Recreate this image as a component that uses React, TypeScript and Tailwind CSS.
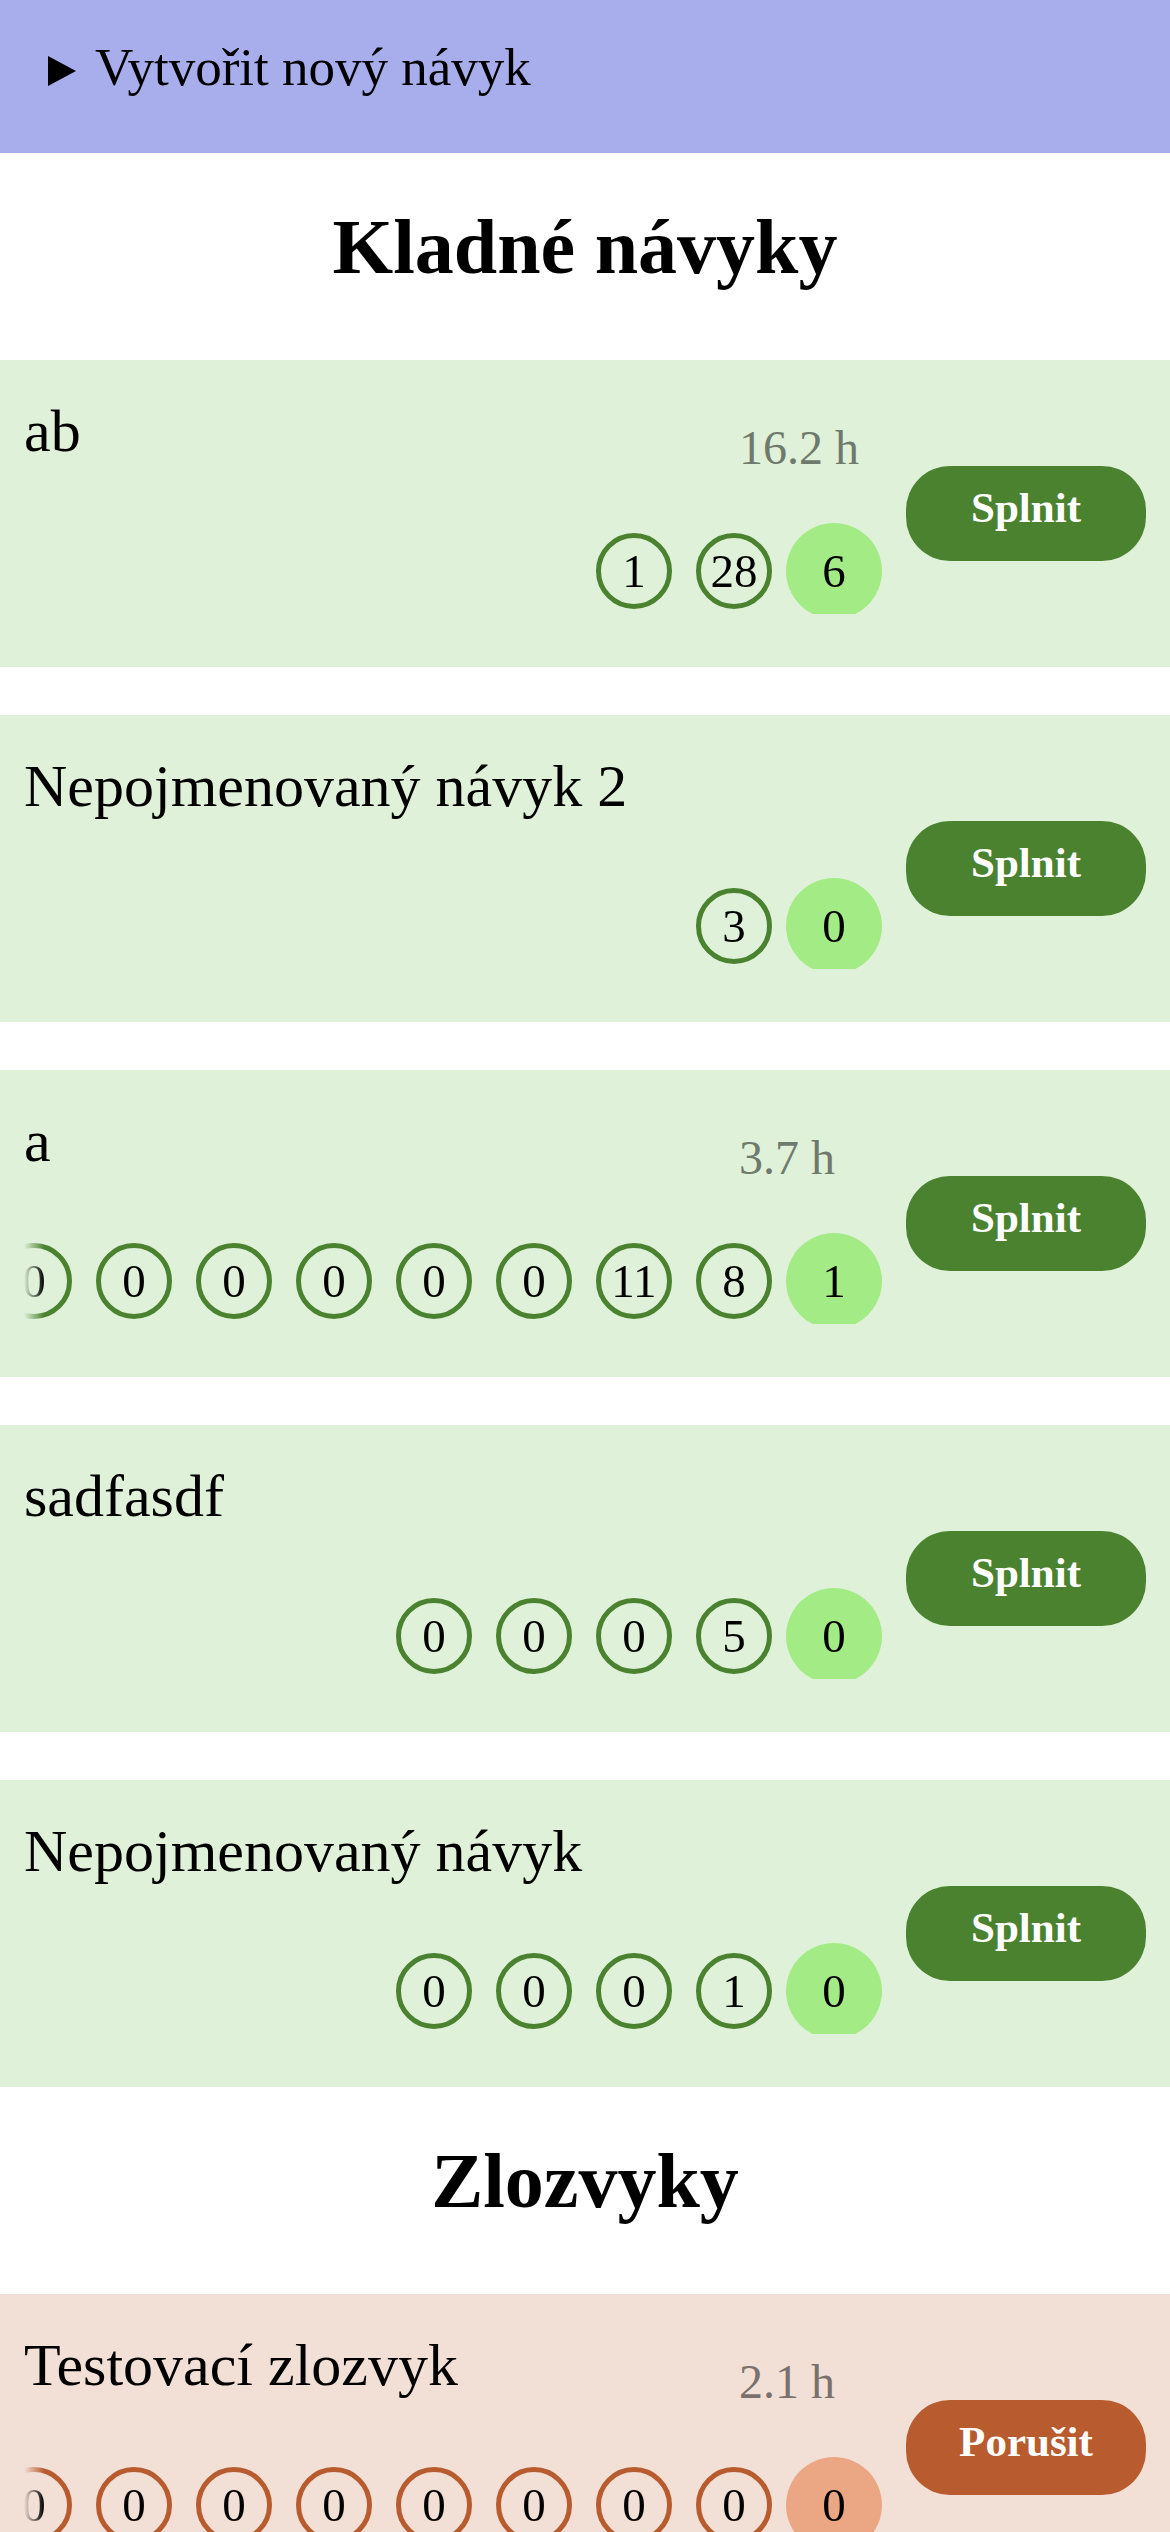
import React from 'react';

type Habit = {
  name: string;
  time?: string;
  history: number[];
  current: number;
};

const good: Habit[] = [
  { name: 'ab', time: '16.2 h', history: [1, 28], current: 6 },
  { name: 'Nepojmenovaný návyk 2', history: [3], current: 0 },
  { name: 'a', time: '3.7 h', history: [0, 0, 0, 0, 0, 0, 0, 0, 11, 8], current: 1 },
  { name: 'sadfasdf', history: [0, 0, 0, 5], current: 0 },
  { name: 'Nepojmenovaný návyk', history: [0, 0, 0, 1], current: 0 },
];

const bad: Habit[] = [
  { name: 'Testovací zlozvyk', time: '2.1 h', history: [0, 0, 0, 0, 0, 0, 0, 0, 0, 0], current: 0 },
];

const themes = {
  good: {
    card: 'bg-[#e0f1d9]',
    ring: 'border-[#4a8230]',
    fill: 'bg-[#a3eb84]',
    button: 'bg-[#4a8230]',
    time: 'text-[#6f7a6d]',
    label: 'Splnit',
  },
  bad: {
    card: 'bg-[#f2e0d7]',
    ring: 'border-[#b85c2f]',
    fill: 'bg-[#eba784]',
    button: 'bg-[#b85c2f]',
    time: 'text-[#7a716c]',
    label: 'Porušit',
  },
};

const HabitCard = ({ habit, kind }: { habit: Habit; kind: 'good' | 'bad' }) => {
  const t = themes[kind];
  return (
    <div className={`flex h-[307px] items-center gap-[34px] px-6 ${t.card}`}>
      <div className="flex min-w-0 flex-1 flex-col self-stretch">
        <div className="flex h-[113px] items-start pt-[41px]">
          <span className="min-w-0 flex-1 whitespace-nowrap text-[60px] leading-none text-black">{habit.name}</span>
          {habit.time && (
            <span className={`mt-[23px] w-[133px] shrink-0 text-[48px] leading-none ${t.time}`}>{habit.time}</span>
          )}
        </div>
        <div className="-mr-[10px] mt-[41px] flex h-[100px] items-end justify-end gap-6 overflow-hidden pb-[5px] pr-[10px] [-webkit-mask-image:linear-gradient(to_right,transparent,black_20px)] [mask-image:linear-gradient(to_right,transparent,black_20px)]">
          {habit.history.map((n, i) => (
            <div
              key={i}
              className={`flex h-[76px] w-[76px] shrink-0 items-center justify-center rounded-full border-[5px] text-[47px] leading-none text-black ${t.ring}`}
            >
              {n}
            </div>
          ))}
          <div
            className={`-mx-[10px] -my-[10px] flex h-[96px] w-[96px] shrink-0 items-center justify-center rounded-full text-[47px] leading-none text-black ${t.fill}`}
          >
            {habit.current}
          </div>
        </div>
      </div>
      <button
        className={`flex h-[95px] w-[240px] shrink-0 items-center justify-center rounded-[44px] pb-[12px] text-[43px] font-bold leading-none text-white ${t.button}`}
      >
        {t.label}
      </button>
    </div>
  );
};

const Heading = ({ children }: { children: React.ReactNode }) => (
  <h2 className="h-[207px] pt-[55px] text-center text-[78px] font-bold leading-none text-black">{children}</h2>
);

export default function App() {
  return (
    <div className="h-[2532px] overflow-hidden bg-white font-['Liberation_Serif',serif]">
      <div className="flex h-[153px] items-start bg-[#a7aeeb] pl-[48px] pt-[41px]">
        <svg width="28" height="30" viewBox="0 0 28 30" className="mt-[15px] shrink-0">
          <polygon points="0,0 28,15 0,30" fill="#000" />
        </svg>
        <span className="ml-[19px] text-[53px] leading-none text-black">Vytvořit nový návyk</span>
      </div>

      <Heading>Kladné návyky</Heading>
      <div className="flex flex-col gap-12">
        {good.map((h) => (
          <HabitCard key={h.name} habit={h} kind="good" />
        ))}
      </div>

      <Heading>Zlozvyky</Heading>
      <div className="flex flex-col gap-12">
        {bad.map((h) => (
          <HabitCard key={h.name} habit={h} kind="bad" />
        ))}
      </div>
    </div>
  );
}
